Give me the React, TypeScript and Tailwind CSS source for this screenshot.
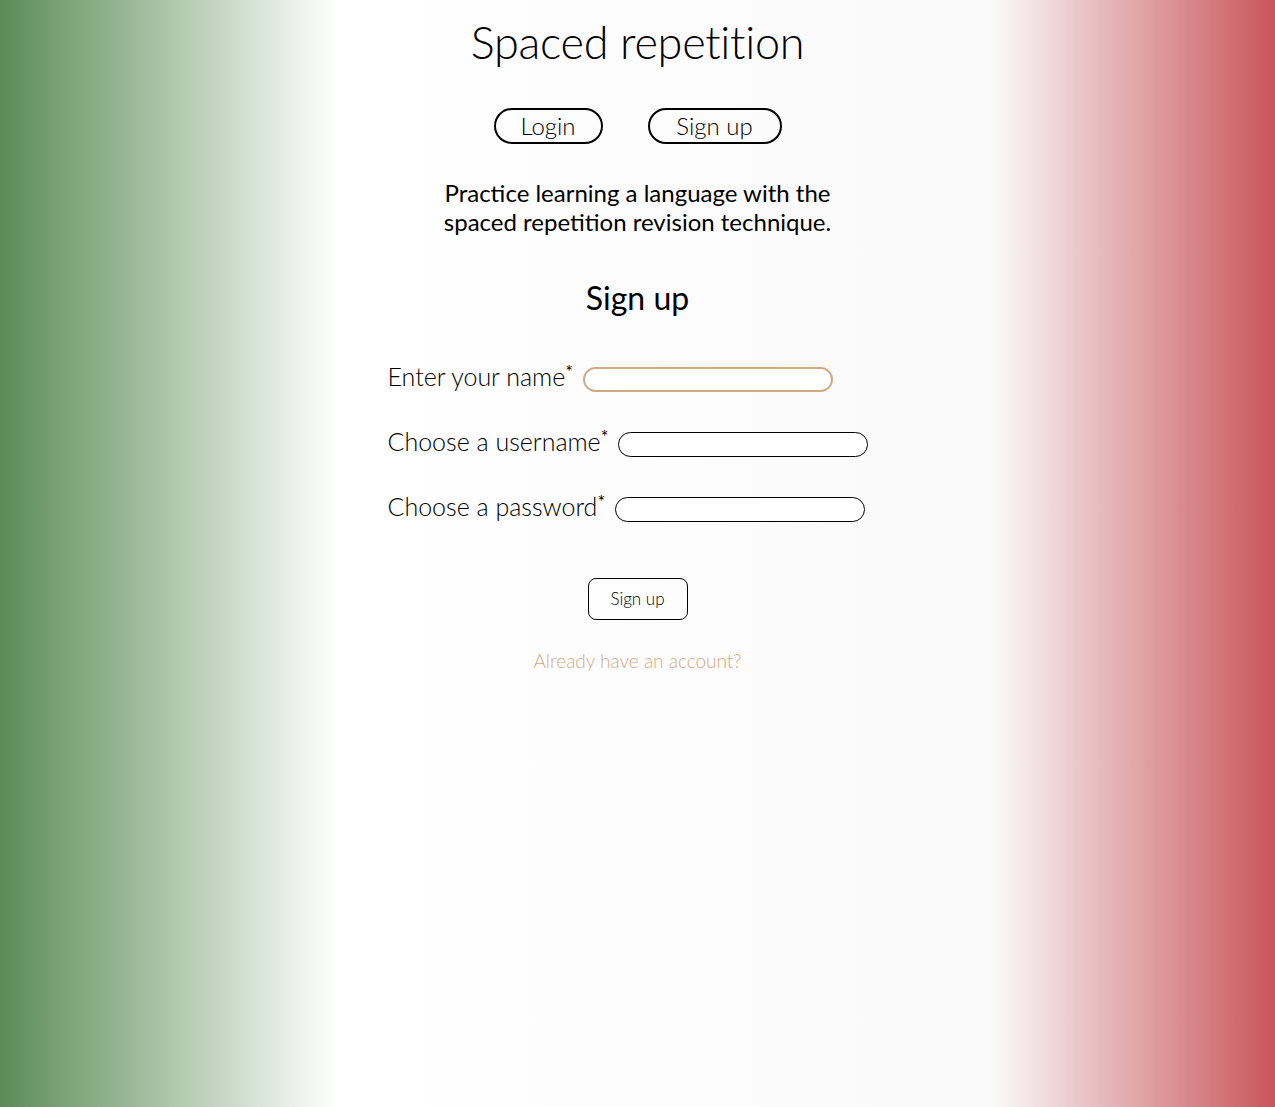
import React from 'react';

const font = { fontFamily: 'Lato, "Noto Sans", sans-serif' };

export default function App() {
  return (
    <div
      className="min-h-[1107px] w-full bg-[linear-gradient(to_right,#5b8c57_0%,#ffffff_26.5%,#f9f9f9_78%,#c9555a_100%)] text-black"
      style={font}
    >
      <div className="flex flex-col items-center pt-[13px]">
        {/* Titre */}
        <h1 className="text-[45px] leading-[58px] font-light tracking-[-0.3px]">Spaced repetition</h1>

        {/* Navigation */}
        <div className="mt-[37px] flex gap-[45px]">
          <button className="h-[36px] w-[109px] rounded-full border-2 border-black text-[24px] font-light leading-none">
            Login
          </button>
          <button className="h-[36px] w-[134px] rounded-full border-2 border-black text-[24px] font-light leading-none">
            Sign up
          </button>
        </div>

        <p className="mt-[34px] text-center text-[24px] leading-[29px] font-normal">
          Practice learning a language with the
          <br />
          spaced repetition revision technique.
        </p>

        <h2 className="mt-[42px] text-[32px] leading-[40px] font-normal">Sign up</h2>

        {/* Formulaire */}
        <form className="mt-[45px] flex w-[500px] flex-col gap-[36px]">
          <div className="flex items-center gap-[10px]">
            <label className="text-[25px] font-light leading-[25px]">
              Enter your name<span className="relative top-[-8px] text-[18px] font-normal">*</span>
            </label>
            <input className="mt-[4px] h-[25px] w-[250px] rounded-full border-2 border-[#d0ab82] bg-white outline-none" />
          </div>
          <div className="flex items-center gap-[10px]">
            <label className="text-[25px] font-light leading-[25px]">
              Choose a username<span className="relative top-[-8px] text-[18px] font-normal">*</span>
            </label>
            <input className="mt-[4px] h-[25px] w-[250px] rounded-full border border-black bg-white outline-none" />
          </div>
          <div className="flex items-center gap-[10px]">
            <label className="text-[25px] font-light leading-[25px]">
              Choose a password<span className="relative top-[-8px] text-[18px] font-normal">*</span>
            </label>
            <input type="password" className="mt-[4px] h-[25px] w-[250px] rounded-full border border-black bg-white outline-none" />
          </div>

          <div className="mt-[20px] flex justify-center">
            <button type="button" className="h-[42px] w-[100px] rounded-[8px] border border-black bg-white/40 text-[17px] font-light">
              Sign up
            </button>
          </div>
        </form>

        <a className="mt-[27px] text-[19px] font-light text-[#d0ab82]">Already have an account?</a>
      </div>
    </div>
  );
}
